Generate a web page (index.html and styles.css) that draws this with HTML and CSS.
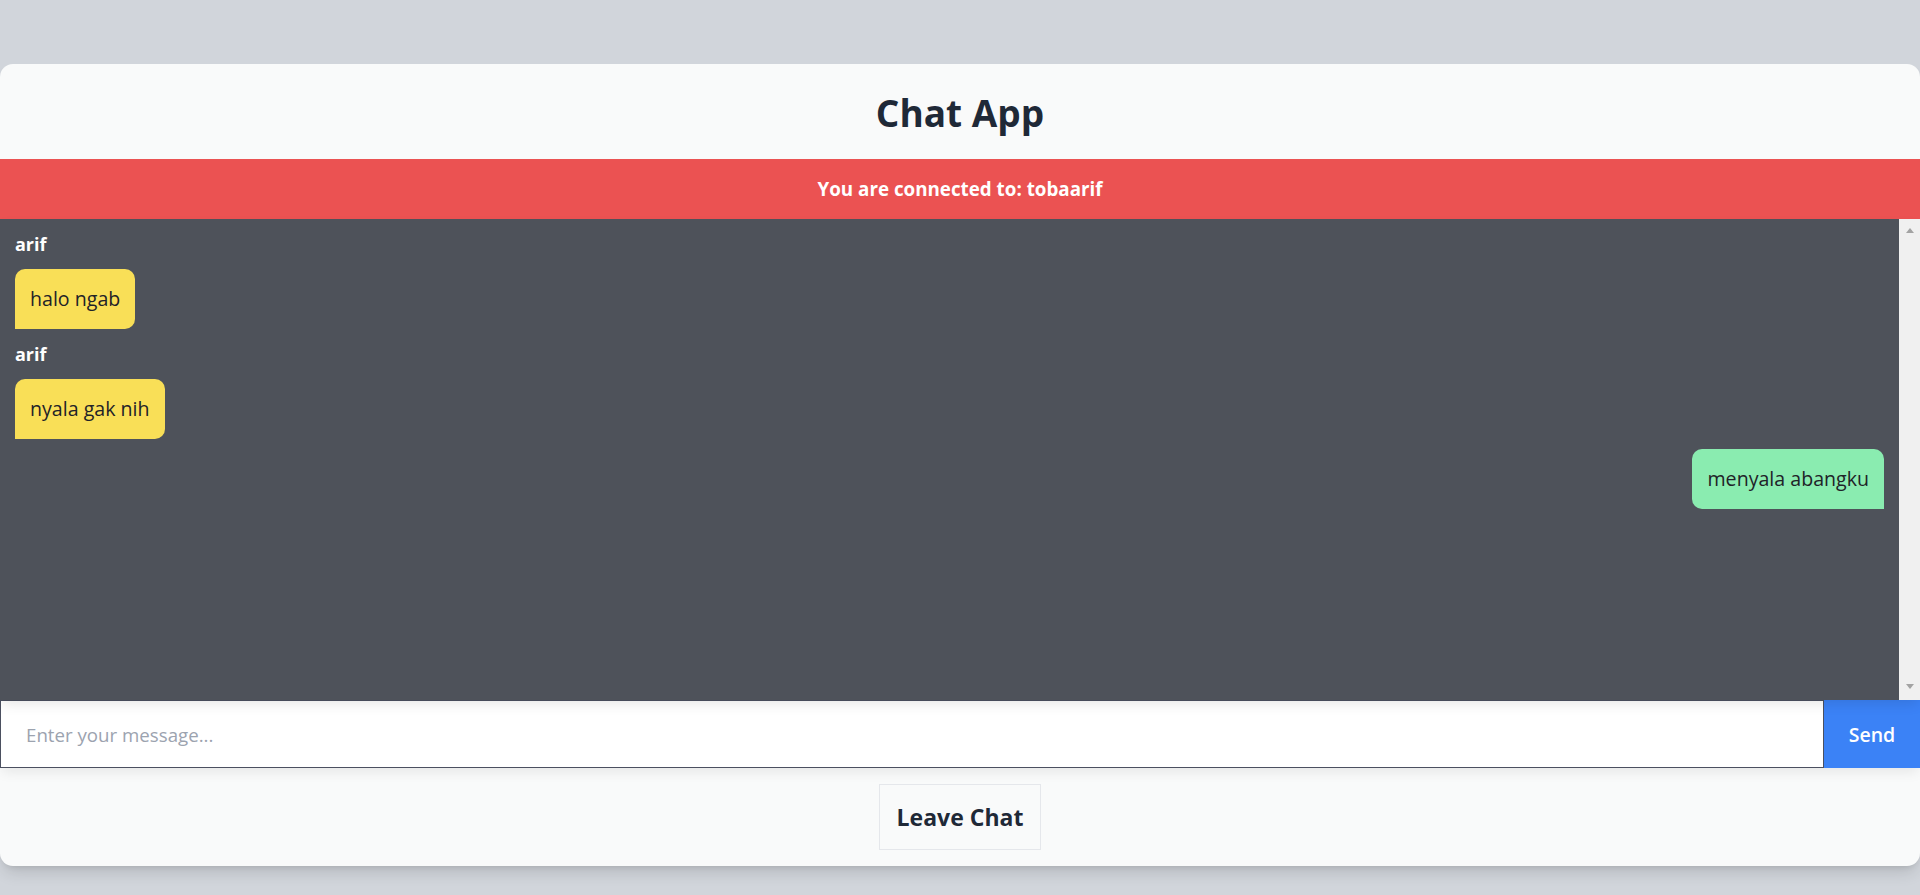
FILE: index.html
```html
<!DOCTYPE html>
<html lang="en">
<head>
<meta charset="utf-8">
<title>Chat App</title>
<link rel="stylesheet" href="styles.css">
</head>
<body>
<main class="card">
  <header class="header"><h1 class="title">Chat App</h1></header>
  <div class="status">You are connected to: tobaarif</div>
  <section class="chat">
    <div class="messages">
      <div class="msg other">
        <div class="sender">arif</div>
        <div class="bubble yellow">halo ngab</div>
      </div>
      <div class="msg other">
        <div class="sender">arif</div>
        <div class="bubble yellow">nyala gak nih</div>
      </div>
      <div class="msg own">
        <div class="bubble green">menyala abangku</div>
      </div>
    </div>
    <div class="scrollbar">
      <span class="arrow up"></span>
      <span class="arrow down"></span>
    </div>
  </section>
  <form class="composer">
    <input class="input" type="text" placeholder="Enter your message...">
    <button class="send" type="button">Send</button>
  </form>
  <footer class="footer"><button class="leave" type="button">Leave Chat</button></footer>
</main>
</body>
</html>
```
FILE: styles.css
```css
* { box-sizing: border-box; }
html, body { margin: 0; padding: 0; }
body {
  background: #d1d5db;
  font-family: "Open Sans", "Noto Sans", sans-serif;
  height: 895px;
  overflow: hidden;
}
.card {
  margin-top: 64px;
  background: #f9fafa;
  border-radius: 13px;
  box-shadow: 0 10px 15px -3px rgba(0,0,0,0.12), 0 4px 6px -4px rgba(0,0,0,0.12);
  display: flex;
  flex-direction: column;
  overflow: hidden;
}
.header {
  padding: 26px 0 24px;
  text-align: center;
}
.title {
  margin: 0;
  font-size: 37px;
  line-height: 45px;
  font-weight: 700;
  color: #1f2937;
}
.status {
  background: #eb5252;
  color: #ffffff;
  font-weight: 700;
  font-size: 18.8px;
  line-height: 30px;
  padding: 15px 0;
  text-align: center;
}
.chat {
  height: 481px;
  background: #4e525a;
  display: flex;
  position: relative;
  z-index: 2;
  box-shadow: 0 6px 12px -2px rgba(0,0,0,0.10);
}
.messages {
  flex: 1;
  padding: 10px 15px;
  display: flex;
  flex-direction: column;
}
.msg { margin-bottom: 10px; display: flex; flex-direction: column; align-items: flex-start; }
.msg.own { align-items: flex-end; }
.sender {
  color: #ffffff;
  font-weight: 700;
  font-size: 18px;
  line-height: 30px;
  margin-bottom: 10px;
}
.bubble {
  font-size: 19.6px;
  line-height: 30px;
  padding: 15px;
  color: #1f2328;
  border-radius: 10px;
}
.yellow { background: #f9df57; border-bottom-left-radius: 0; }
.green { background: #8aecb0; border-bottom-right-radius: 0; }
.scrollbar {
  width: 21px;
  background: #f0f0f0;
  display: flex;
  flex-direction: column;
  justify-content: space-between;
  align-items: center;
  padding: 9px 0 11px;
}
.arrow { width: 0; height: 0; border-left: 4.5px solid transparent; border-right: 4.5px solid transparent; }
.arrow.up { border-bottom: 5px solid #a3a3a3; }
.arrow.down { border-top: 5px solid #a3a3a3; }
.composer {
  margin: 0;
  display: flex;
  height: 68px;
  position: relative;
  z-index: 1;
  box-shadow: 0 6px 12px -2px rgba(0,0,0,0.08);
}
.input {
  flex: 1;
  border: 1px solid #4b5060;
  background: #ffffff;
  font-family: inherit;
  font-size: 18.7px;
  padding: 0 25px;
  color: #1f2937;
  outline: none;
}
.input::placeholder { color: #9ca3af; }
.send {
  width: 96px;
  border: none;
  background: #3b82f6;
  color: #ffffff;
  font-family: inherit;
  font-weight: 600;
  font-size: 19.5px;
}
.footer {
  padding: 16px 0 16px;
  display: flex;
  justify-content: center;
}
.leave {
  background: #f9fafa;
  border: 1px solid #e5e7eb;
  font-family: inherit;
  font-weight: 700;
  font-size: 23px;
  line-height: 34px;
  padding: 15px 17px;
  color: #1f2937;
}
```
